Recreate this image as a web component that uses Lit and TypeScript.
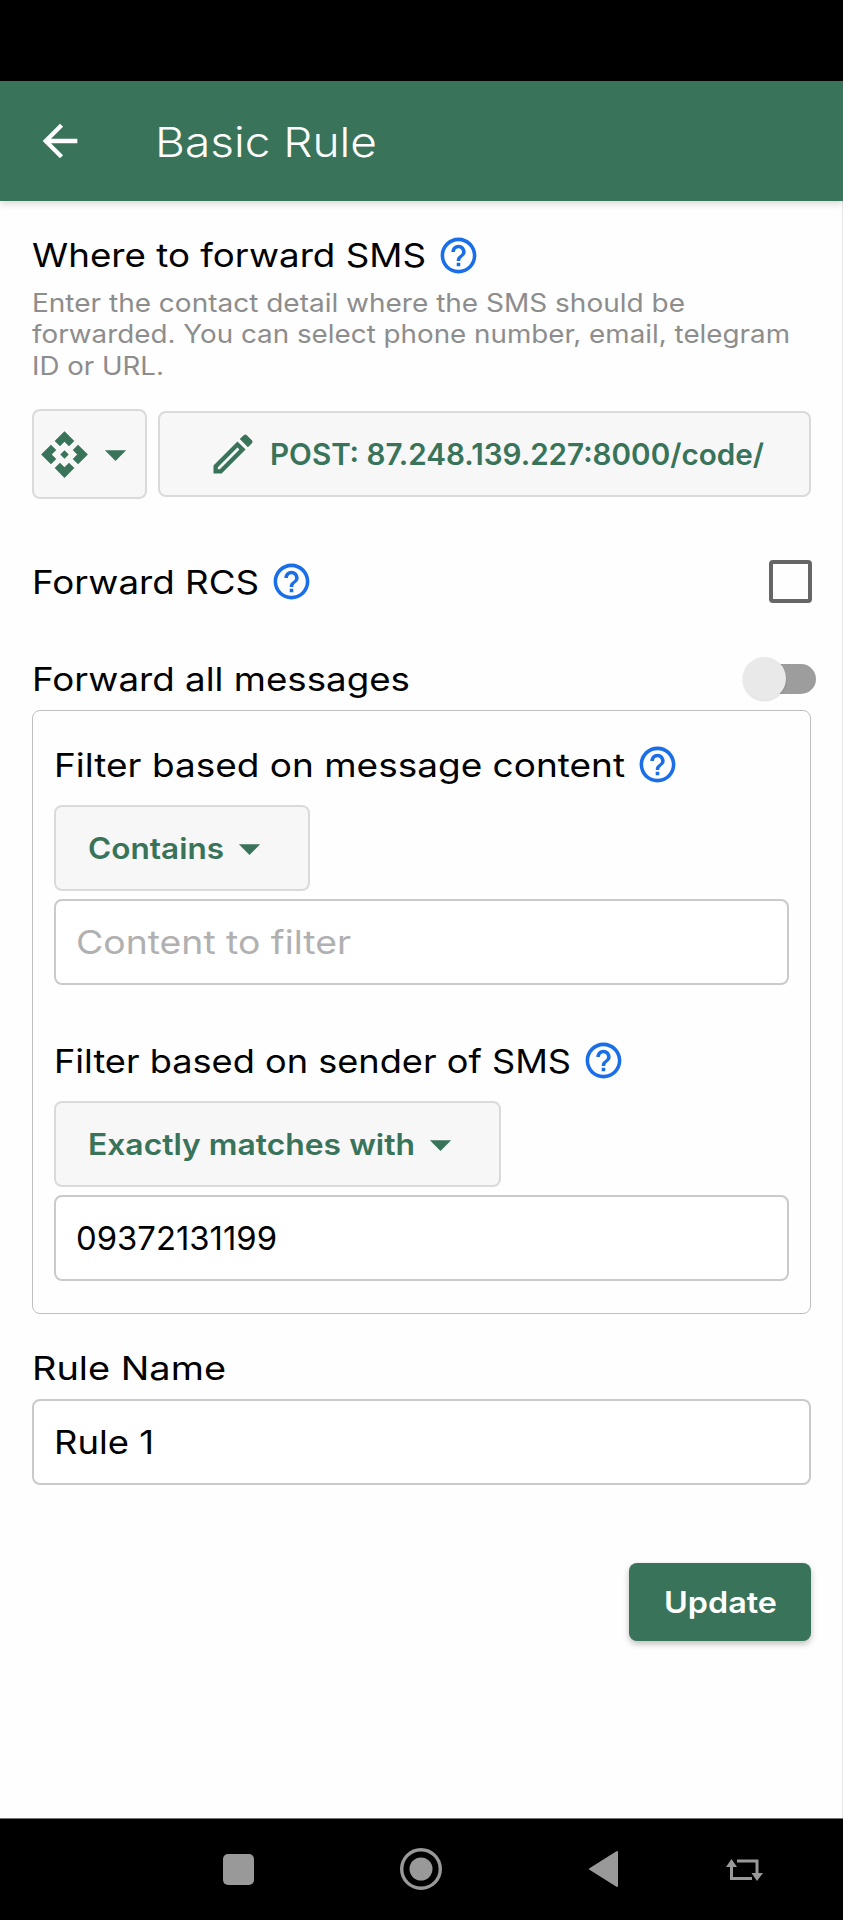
import { LitElement, html, css, svg } from "lit";
import { customElement, property } from "lit/decorators.js";

const paths: Record<string, string> = {
  back: "M20 11H7.83l5.59-5.59L12 4l-8 8 8 8 1.41-1.41L7.83 13H20v-2z",
  help: "M11 18h2v-2h-2v2zm1-16C6.48 2 2 6.48 2 12s4.48 10 10 10 10-4.48 10-10S17.52 2 12 2zm0 18c-4.41 0-8-3.59-8-8s3.59-8 8-8 8 3.59 8 8-3.59 8-8 8zm0-14c-2.21 0-4 1.79-4 4h2c0-1.1.9-2 2-2s2 .9 2 2c0 2-3 1.75-3 5h2c0-2.25 3-2.5 3-5 0-2.21-1.79-4-4-4z",
  api: "M14 12l-2 2-2-2 2-2 2 2zm-2-6l2.12 2.12 2.5-2.5L12 1 7.38 5.62l2.5 2.5L12 6zm-6 6l2.12-2.12-2.5-2.5L1 12l4.62 4.62 2.5-2.5L6 12zm12 0l-2.12 2.12 2.5 2.5L23 12l-4.62-4.62-2.5 2.5L18 12zm-6 6l-2.12-2.12-2.5 2.5L12 23l4.62-4.62-2.5-2.5L12 18z",
  caret: "M7 10l5 5 5-5z",
  edit: "M14.06 9.02l.92.92L5.92 19H5v-.92l9.06-9.06M17.66 3c-.25 0-.51.1-.7.29l-1.83 1.83 3.75 3.75 1.83-1.83c.39-.39.39-1.02 0-1.41l-2.34-2.34c-.2-.2-.45-.29-.71-.29zm-3.6 3.19L3 17.25V21h3.75L17.81 9.94l-3.75-3.75z",
};

/** Material glyph on a 24-unit grid, coloured by currentColor. */
@customElement("md-icon")
class MdIcon extends LitElement {
  @property() name = "";
  @property({ type: Number }) size = 51;
  static styles = css`
    :host { display: block; flex: none; }
    svg { display: block; fill: currentColor; }
  `;
  render() {
    return html`<svg width=${this.size} height=${this.size} viewBox="0 0 24 24">${svg`<path d=${paths[this.name]}></path>`}</svg>`;
  }
}

/** A single line of text set to a given advance width. */
@customElement("text-line")
class TextLine extends LitElement {
  @property() text = "";
  @property({ type: Number }) width = 100;
  static styles = css`
    :host { display: block; flex: none; height: 1.2em; }
    svg { display: block; height: 1.2em; overflow: visible; }
    text { fill: currentColor; }
  `;
  render() {
    return html`<svg width=${this.width}>${svg`<text x="0" y="0.96em" textLength=${this.width} lengthAdjust="spacingAndGlyphs">${this.text}</text>`}</svg>`;
  }
}

@customElement("app-root")
class AppRoot extends LitElement {
  static styles = css`
    :host {
      display: flex; flex-direction: column; box-sizing: border-box;
      width: 843px; height: 1920px; background: #fefefe; overflow: hidden;
      font-family: Inter, "Open Sans", sans-serif; color: #000;
    }
    * { box-sizing: border-box; }
    .status { height: 81px; background: #000; flex: none; }
    header {
      height: 120px; flex: none; background: #38735a; color: #fff; display: flex;
      align-items: center; padding-left: 34px; gap: 69px;
      box-shadow: 0 2px 8px rgba(0, 0, 0, .18); z-index: 1;
    }
    .title { font-size: 41.5px; font-weight: 300; padding-top: 1px; }
    main { flex: 1; padding: 30px 31px 0 32px; border-right: 1px solid #e6e6e6; }
    .heading { display: flex; align-items: center; height: 48px; gap: 11px; font-size: 33.2px; font-weight: 400; }
    .heading md-icon { color: #1a6fe8; }
    .desc { margin-top: 9px; color: #8d8d8d; font-size: 25.2px; font-weight: 400; }
    .desc text-line { height: 31.3px; }
    .target { display: flex; align-items: center; gap: 11px; margin-top: 27px; height: 90px; }
    .btn {
      display: flex; align-items: center; height: 86px; width: max-content;
      background: #f7f7f7; border: 2px solid #dadada; border-radius: 8px;
      color: #38735a; font-size: 29.2px; font-weight: 600; padding-top: 1px;
    }
    .kind { height: 90px; width: 115px; padding-left: 5px; }
    .url { flex: 1; padding-left: 47px; gap: 11px; }
    .row { display: flex; align-items: center; justify-content: space-between; }
    .rcs { margin-top: 59px; }
    .all { margin-top: 49px; }
    .check { width: 43px; height: 43px; border: 4px solid #666; border-radius: 4px; margin-right: -1px; }
    .toggle { width: 66px; height: 30px; border-radius: 15px; background: #9d9d9d; display: flex; align-items: center; margin-right: -5px; }
    .thumb { flex: none; width: 43px; height: 43px; border-radius: 50%; background: #e9e9e9; margin-left: -7px; box-shadow: 0 1px 2px rgba(0, 0, 0, .16); }
    .panel { margin-top: 7px; height: 604px; border: 1px solid #bebebe; border-radius: 8px; padding: 30px 21px 0; }
    .select { margin-top: 16px; padding: 1px 33px 0 32px; }
    .field { display: flex; align-items: center; height: 86px; margin-top: 8px; border: 2px solid #cacaca; border-radius: 8px; padding: 1px 0 0 20px; font-size: 33.2px; font-weight: 400; background: #fff; }
    .hint { color: #b0b0b0; }
    .sender { margin-top: 52px; }
    .rule { margin-top: 30px; }
    .rule + .field { margin-top: 7px; }
    .update {
      display: flex; align-items: center; justify-content: center; width: 182px; height: 78px;
      margin: 78px 0 0 auto; border-radius: 8px; background: #38735a; color: #fff; padding-top: 1px;
      font-size: 29.2px; font-weight: 600; box-shadow: 0 3px 6px rgba(0, 0, 0, .25);
    }
    nav { height: 102px; flex: none; background: #000; border-top: 1px solid #777; }
    nav svg { display: block; }
  `;
  private heading(text: string, width: number, cls = "", help = true) {
    return html`<div class="heading ${cls}">
      <text-line .text=${text} .width=${width}></text-line>
      ${help ? html`<md-icon name="help" size="43"></md-icon>` : ""}
    </div>`;
  }
  private select(text: string, width: number) {
    return html`<div class="btn select"><text-line .text=${text} .width=${width}></text-line><md-icon name="caret"></md-icon></div>`;
  }
  private field(text: string, width: number, cls = "") {
    return html`<div class="field ${cls}"><text-line .text=${text} .width=${width}></text-line></div>`;
  }
  render() {
    return html`
      <div class="status"></div>
      <header>
        <md-icon name="back" size="52"></md-icon>
        <text-line class="title" .text=${"Basic Rule"} .width=${222}></text-line>
      </header>
      <main>
        ${this.heading("Where to forward SMS", 394)}
        <div class="desc">
          <text-line .text=${"Enter the contact detail where the SMS should be"} .width=${653}></text-line>
          <text-line .text=${"forwarded. You can select phone number, email, telegram"} .width=${758}></text-line>
          <text-line .text=${"ID or URL."} .width=${132}></text-line>
        </div>
        <div class="target">
          <div class="btn kind"><md-icon name="api"></md-icon><md-icon name="caret"></md-icon></div>
          <div class="btn url">
            <md-icon name="edit" size="52"></md-icon>
            <text-line .text=${"POST: 87.248.139.227:8000/code/"} .width=${494}></text-line>
          </div>
        </div>
        <div class="row rcs">${this.heading("Forward RCS", 227)}<div class="check"></div></div>
        <div class="row all">${this.heading("Forward all messages", 378, "", false)}<div class="toggle"><div class="thumb"></div></div></div>
        <section class="panel">
          ${this.heading("Filter based on message content", 571)}
          ${this.select("Contains", 136)}
          ${this.field("Content to filter", 275, "hint")}
          ${this.heading("Filter based on sender of SMS", 517, "sender")}
          ${this.select("Exactly matches with", 327)}
          ${this.field("09372131199", 201)}
        </section>
        ${this.heading("Rule Name", 194, "rule", false)}
        ${this.field("Rule 1", 100)}
        <div class="update"><text-line .text=${"Update"} .width=${113}></text-line></div>
      </main>
      <nav>
        <svg width="843" height="101" viewBox="0 1819 843 101" fill="#999">
          <rect x="223" y="1854" width="31" height="31" rx="5"></rect>
          <circle cx="421" cy="1869" r="19.3" fill="none" stroke="#999" stroke-width="3.4"></circle>
          <circle cx="421" cy="1869" r="11.5"></circle>
          <path d="M590 1869 L617 1852 V1886 Z" stroke="#999" stroke-width="2" stroke-linejoin="round"></path>
          <path d="M737 1861 H757 V1874 M752 1878.5 H731.5 V1864" fill="none" stroke="#999" stroke-width="3"></path>
          <path d="M726 1867 L731.5 1859 L737 1867 Z M751.5 1873 L757 1881 L763 1873 Z"></path>
        </svg>
      </nav>
    `;
  }
}
